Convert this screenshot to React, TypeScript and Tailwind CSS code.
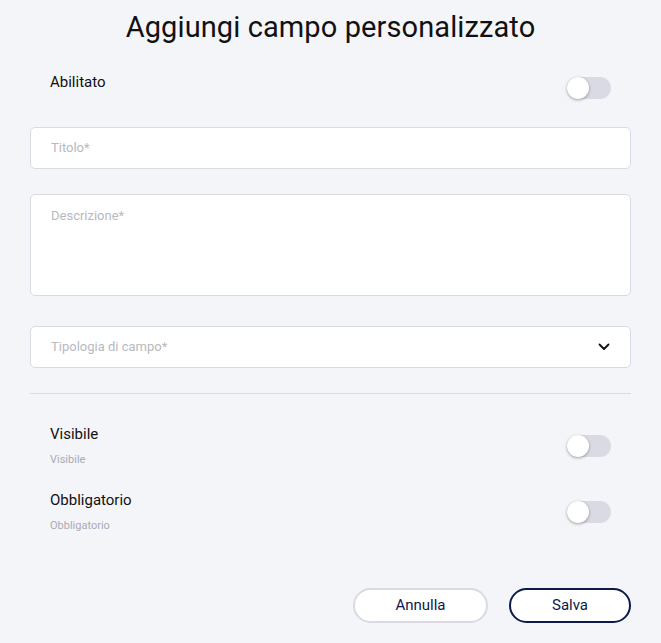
import React from 'react';

function Toggle() {
  return (
    <div className="relative h-[22px] w-[44px] shrink-0 rounded-full bg-[#d9dae3]">
      <div className="absolute left-0 top-0 h-[22px] w-[22px] rounded-full bg-white shadow-[0_1px_3px_rgba(0,0,0,0.35)]" />
    </div>
  );
}

function SwitchRow({ label, hint, className }: { label: string; hint?: string; className?: string }) {
  return (
    <div className={`flex justify-between pl-5 pr-5 ${hint ? 'items-center' : 'items-start'} ${className ?? ''}`}>
      <div className="flex flex-col">
        <span className="text-[15px] leading-[20px] text-[#111]">{label}</span>
        {hint && <span className="mt-[9px] text-[11px] leading-[14px] text-[#a9aab3]">{hint}</span>}
      </div>
      <div className={hint ? '' : 'mt-[5px]'}>
        <Toggle />
      </div>
    </div>
  );
}

export default function App() {
  return (
    <div className="min-h-[643px] w-full bg-[#f4f5f9] px-[30px] font-['Roboto',sans-serif]">
      <h1 className="pt-[9px] text-center text-[29px] leading-[36px] tracking-[0.1px] text-[#111]">
        Aggiungi campo personalizzato
      </h1>

      <SwitchRow label="Abilitato" className="mt-[27px]" />

      <div className="mt-[28px] flex h-[42px] items-center rounded-[5px] border border-[#d9dae3] bg-white px-5">
        <span className="text-[13px] text-[#b8b9bf]">Titolo*</span>
      </div>

      <div className="mt-[25px] h-[102px] rounded-[5px] border border-[#d9dae3] bg-white px-5 pt-[8px]">
        <span className="text-[13px] text-[#b8b9bf]">Descrizione*</span>
      </div>

      <div className="mt-[30px] flex h-[42px] items-center justify-between rounded-[5px] border border-[#d9dae3] bg-white pl-5 pr-[20px]">
        <span className="text-[13px] text-[#b8b9bf]">Tipologia di campo*</span>
        <svg width="12" height="8" viewBox="0 0 12 8" fill="none">
          <path d="M1.5 1.5L6 6L10.5 1.5" stroke="#111" strokeWidth="1.8" strokeLinecap="round" strokeLinejoin="round" />
        </svg>
      </div>

      <div className="mt-[25px] h-px bg-[#d9dae3]" />

      <SwitchRow label="Visibile" hint="Visibile" className="mt-[30px]" />
      <SwitchRow label="Obbligatorio" hint="Obbligatorio" className="mt-[23px]" />

      <div className="mt-[55px] flex justify-end gap-[21px]">
        <button className="h-[35px] w-[135px] rounded-full border-2 border-[#d9dae3] bg-white text-[15px] text-[#0b1a4a]">
          Annulla
        </button>
        <button className="h-[35px] w-[122px] rounded-full border-2 border-[#0b1a4a] bg-white text-[15px] text-[#0b1a4a]">
          Salva
        </button>
      </div>
    </div>
  );
}
